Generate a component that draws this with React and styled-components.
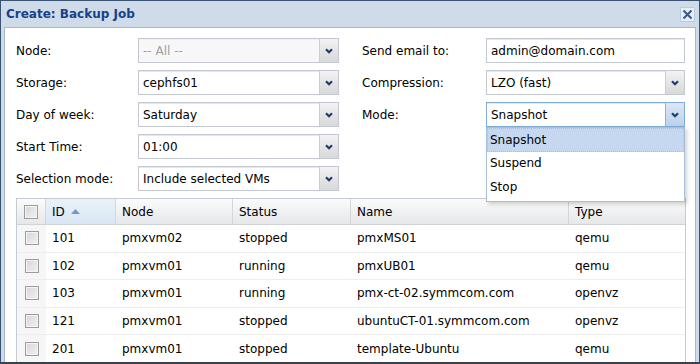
import React from "react";
import styled, { createGlobalStyle } from "styled-components";

const GlobalStyle = createGlobalStyle`
  html, body { margin: 0; padding: 0; background: #fff; }
  body { font-family: "DejaVu Sans", Tahoma, sans-serif; font-size: 12px; color: #000; }
  * { box-sizing: border-box; }
`;

const Window = styled.div`
  position: relative;
  width: 700px;
  height: 364px;
  background: #cfdbe9;
  border: 1px solid #3b5373;
  border-bottom: 2px solid #39414b;
  display: flex;
  flex-direction: column;
  overflow: hidden;
`;

const Header = styled.div`
  height: 26px;
  flex: none;
  display: flex;
  align-items: center;
  justify-content: space-between;
  padding: 0 4px 0 5px;
`;

const Title = styled.div`
  font-weight: bold;
  font-size: 12px;
  color: #15428b;
`;

const CloseTool = styled.div`
  width: 15px;
  height: 15px;
  border: 1px solid #b8cbe2;
  background: #e8eef6;
  border-radius: 1px;
  display: flex;
  align-items: center;
  justify-content: center;
`;

const Body = styled.div`
  position: relative;
  flex: 1;
  margin: 0 3px 0 3px;
  background: #fff;
  border: 1px solid #a9b9cd;
  border-bottom: none;
  padding: 10px 0 0 11px;
  display: flex;
  flex-direction: column;
  gap: 7px;
  overflow: hidden;
`;

const Form = styled.div`
  display: flex;
  gap: 23px;
  align-items: flex-start;
`;

const FieldColumn = styled.div`
  width: 323px;
  display: flex;
  flex-direction: column;
  gap: 7px;
  position: relative;
`;

const FieldRow = styled.div`
  display: grid;
  grid-template-columns: ${(p) => p.$label}px 1fr;
  align-items: center;
  height: 25px;
`;

const Label = styled.span`
  color: #000;
`;

const FieldBox = styled.div`
  display: flex;
  height: 25px;
  border: 1px solid ${(p) => (p.$focus ? "#7eadd9" : "#c4c8d0")};
  background: ${(p) => (p.$disabled ? "#f7f7f7" : "#fff")};
  width: ${(p) => p.$width}px;
`;

const FieldText = styled.div`
  flex: 1;
  display: flex;
  align-items: center;
  padding-left: 4px;
  color: ${(p) => (p.$disabled ? "#a0a0a0" : "#000")};
  border-top: 1px solid ${(p) => (p.$disabled ? "#f0f0f0" : "#e6e8ec")};
`;

const Trigger = styled.div`
  width: 19px;
  flex: none;
  display: flex;
  align-items: center;
  justify-content: center;
  border-left: 1px solid ${(p) => (p.$active ? "#8eb2d8" : "#c9ccd2")};
  background: ${(p) =>
    p.$active
      ? "linear-gradient(#dbe8f6, #bcd1ea)"
      : "linear-gradient(#f3f3f3, #d8d8d8)"};
`;

const Chevron = () => (
  <svg width="8" height="6" viewBox="0 0 8 6">
    <path d="M1 1.2 L4 4.2 L7 1.2" fill="none" stroke="#1b3f74" strokeWidth="2.2" />
  </svg>
);

const Combo = ({ value, width, disabled, active }) => (
  <FieldBox $width={width} $disabled={disabled} $focus={active}>
    <FieldText $disabled={disabled}>{value}</FieldText>
    <Trigger $active={active}>
      <Chevron />
    </Trigger>
  </FieldBox>
);

const TextField = ({ value, width }) => (
  <FieldBox $width={width}>
    <FieldText>{value}</FieldText>
  </FieldBox>
);

const DropList = styled.div`
  position: absolute;
  top: 89px;
  left: 124px;
  width: 199px;
  background: #fff;
  border: 1px solid #a9c0dc;
  box-shadow: 2px 2px 4px rgba(0, 0, 0, 0.18);
  padding: 0 0 2px 0;
  z-index: 5;
`;

const DropItem = styled.div`
  height: 23.5px;
  display: flex;
  align-items: center;
  padding-left: 2px;
  background: ${(p) => (p.$selected ? "#c6d8f0" : "transparent")};
  border: 1px dotted ${(p) => (p.$selected ? "#a6bfe0" : "transparent")};
`;

const Grid = styled.div`
  width: 670px;
  border: 1px solid #c5cbd3;
  border-bottom: none;
  flex: 1;
`;

const GridHead = styled.div`
  display: grid;
  grid-template-columns: 29px 70px 117px 118px 218px 1fr;
  height: 26px;
  background: linear-gradient(#fbfbfb, #e6e7e9);
  border-bottom: 1px solid #cfd2d6;
`;

const HeadCell = styled.div`
  display: flex;
  align-items: center;
  gap: 6px;
  padding-left: ${(p) => (p.$check ? 0 : 6)}px;
  justify-content: ${(p) => (p.$check ? "center" : "flex-start")};
  border-right: 1px solid #d3d6da;
  background: ${(p) => (p.$sorted ? "linear-gradient(#eaf1fa, #d9e6f5)" : "transparent")};
  &:last-child { border-right: none; }
`;

const SortArrow = () => (
  <svg width="9" height="5" viewBox="0 0 9 5">
    <path d="M0 5 L4.5 0 L9 5 Z" fill="#7399c9" />
  </svg>
);

const Row = styled.div`
  display: grid;
  grid-template-columns: 29px 70px 117px 118px 218px 1fr;
  height: 27.6px;
  border-bottom: 1px solid #ededed;
`;

const Cell = styled.div`
  display: flex;
  align-items: center;
  padding-left: ${(p) => (p.$check ? 0 : 6)}px;
  justify-content: ${(p) => (p.$check ? "center" : "flex-start")};
  background: ${(p) => (p.$check ? "#f6f6f6" : "transparent")};
`;

const Checkbox = styled.span`
  display: inline-block;
  width: 14px;
  height: 14px;
  border: 1px solid #9c9c9c;
  background: linear-gradient(135deg, #d6d6d6, #f2f2f2);
  box-shadow: inset 0 0 0 1px #f4f4f4;
`;

const rows = [
  ["101", "pmxvm02", "stopped", "pmxMS01", "qemu"],
  ["102", "pmxvm01", "running", "pmxUB01", "qemu"],
  ["103", "pmxvm01", "running", "pmx-ct-02.symmcom.com", "openvz"],
  ["121", "pmxvm01", "stopped", "ubuntuCT-01.symmcom.com", "openvz"],
  ["201", "pmxvm01", "stopped", "template-Ubuntu", "qemu"],
];

export default function App() {
  return (
    <>
      <GlobalStyle />
      <Window>
        <Header>
          <Title>Create: Backup Job</Title>
          <CloseTool>
            <svg width="11" height="11" viewBox="0 0 11 11">
              <path d="M1.5 1.5 L9.5 9.5 M9.5 1.5 L1.5 9.5" stroke="#34598c" strokeWidth="2" />
            </svg>
          </CloseTool>
        </Header>
        <Body>
          <Form>
            <FieldColumn>
              <FieldRow $label={122}>
                <Label>Node:</Label>
                <Combo value="-- All --" width={201} disabled />
              </FieldRow>
              <FieldRow $label={122}>
                <Label>Storage:</Label>
                <Combo value="cephfs01" width={201} />
              </FieldRow>
              <FieldRow $label={122}>
                <Label>Day of week:</Label>
                <Combo value="Saturday" width={201} />
              </FieldRow>
              <FieldRow $label={122}>
                <Label>Start Time:</Label>
                <Combo value="01:00" width={201} />
              </FieldRow>
              <FieldRow $label={122}>
                <Label>Selection mode:</Label>
                <Combo value="Include selected VMs" width={201} />
              </FieldRow>
            </FieldColumn>
            <FieldColumn>
              <FieldRow $label={124}>
                <Label>Send email to:</Label>
                <TextField value="admin@domain.com" width={199} />
              </FieldRow>
              <FieldRow $label={124}>
                <Label>Compression:</Label>
                <Combo value="LZO (fast)" width={199} />
              </FieldRow>
              <FieldRow $label={124}>
                <Label>Mode:</Label>
                <Combo value="Snapshot" width={199} active />
              </FieldRow>
              <DropList>
                <DropItem $selected>Snapshot</DropItem>
                <DropItem>Suspend</DropItem>
                <DropItem>Stop</DropItem>
              </DropList>
            </FieldColumn>
          </Form>
          <Grid>
            <GridHead>
              <HeadCell $check>
                <Checkbox />
              </HeadCell>
              <HeadCell $sorted>
                ID <SortArrow />
              </HeadCell>
              <HeadCell>Node</HeadCell>
              <HeadCell>Status</HeadCell>
              <HeadCell>Name</HeadCell>
              <HeadCell>Type</HeadCell>
            </GridHead>
            {rows.map((r) => (
              <Row key={r[0]}>
                <Cell $check>
                  <Checkbox />
                </Cell>
                {r.map((v, i) => (
                  <Cell key={i}>{v}</Cell>
                ))}
              </Row>
            ))}
          </Grid>
        </Body>
      </Window>
    </>
  );
}
